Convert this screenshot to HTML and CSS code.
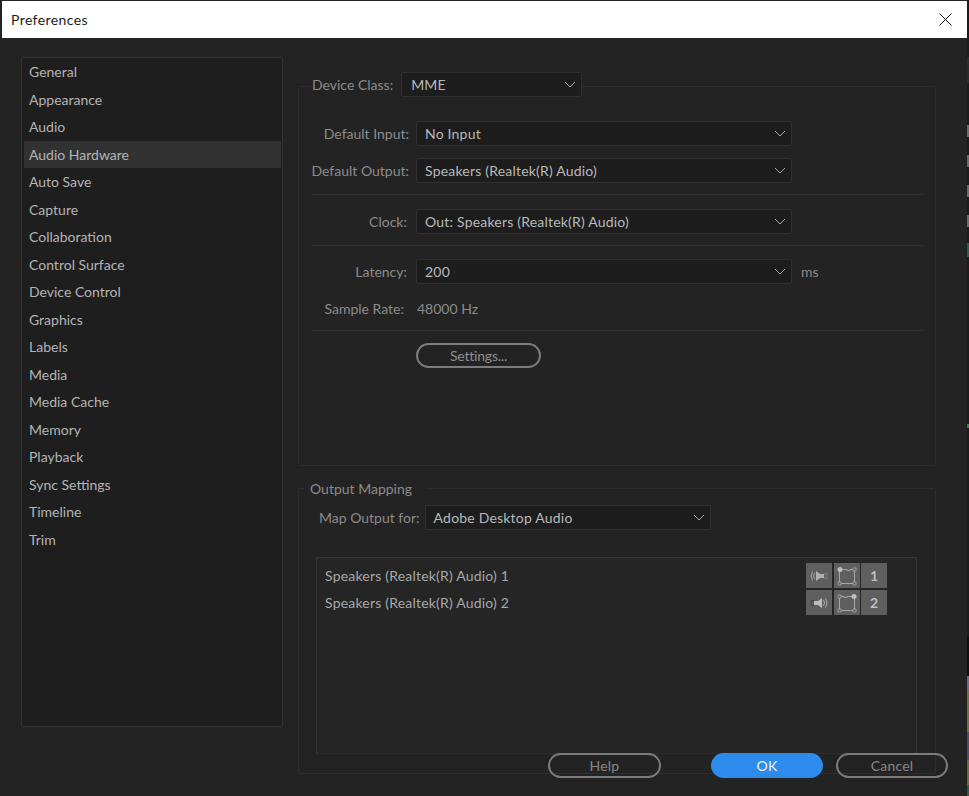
FILE: index.html
```html
<!DOCTYPE html>
<html lang="en">
<head>
<meta charset="utf-8">
<title>Preferences</title>
<link rel="stylesheet" href="styles.css">
</head>
<body>
<div class="window">
  <header class="titlebar">
    <span class="title">Preferences</span>
    <svg class="close" width="13" height="13" viewBox="0 0 13 13"><path d="M.5.5l12 12M12.5.5l-12 12" stroke="#111" stroke-width="1" fill="none"/></svg>
  </header>
  <div class="content">
    <nav class="sidebar">
      <div class="nav-item">General</div>
      <div class="nav-item">Appearance</div>
      <div class="nav-item">Audio</div>
      <div class="nav-item selected">Audio Hardware</div>
      <div class="nav-item">Auto Save</div>
      <div class="nav-item">Capture</div>
      <div class="nav-item">Collaboration</div>
      <div class="nav-item">Control Surface</div>
      <div class="nav-item">Device Control</div>
      <div class="nav-item">Graphics</div>
      <div class="nav-item">Labels</div>
      <div class="nav-item">Media</div>
      <div class="nav-item">Media Cache</div>
      <div class="nav-item">Memory</div>
      <div class="nav-item">Playback</div>
      <div class="nav-item">Sync Settings</div>
      <div class="nav-item">Timeline</div>
      <div class="nav-item">Trim</div>
    </nav>
    <main class="panels">
      <section class="group device">
        <div class="legend device-legend">
          <span class="label">Device Class:</span>
          <div class="select class-select"><span>MME</span><svg class="chev" width="12" height="7" viewBox="0 0 12 7"><path d="M1 1l5 5 5-5" fill="none" stroke="#a8a8a8"/></svg></div>
        </div>
        <div class="row row-input">
          <span class="label cell">Default Input:</span>
          <div class="select wide"><span>No Input</span><svg class="chev" width="12" height="7" viewBox="0 0 12 7"><path d="M1 1l5 5 5-5" fill="none" stroke="#a8a8a8"/></svg></div>
        </div>
        <div class="row row-output">
          <span class="label cell">Default Output:</span>
          <div class="select wide"><span>Speakers (Realtek(R) Audio)</span><svg class="chev" width="12" height="7" viewBox="0 0 12 7"><path d="M1 1l5 5 5-5" fill="none" stroke="#a8a8a8"/></svg></div>
        </div>
        <hr class="divider div-a">
        <div class="row">
          <span class="label cell clock-label">Clock:</span>
          <div class="select wide"><span>Out: Speakers (Realtek(R) Audio)</span><svg class="chev" width="12" height="7" viewBox="0 0 12 7"><path d="M1 1l5 5 5-5" fill="none" stroke="#a8a8a8"/></svg></div>
        </div>
        <hr class="divider div-b">
        <div class="row">
          <span class="label cell latency">Latency:</span>
          <div class="select wide"><span>200</span><svg class="chev" width="12" height="7" viewBox="0 0 12 7"><path d="M1 1l5 5 5-5" fill="none" stroke="#a8a8a8"/></svg></div>
          <span class="label unit">ms</span>
        </div>
        <div class="row rate">
          <span class="label cell rate-label">Sample Rate:</span>
          <span class="label rate-value">48000 Hz</span>
        </div>
        <hr class="divider div-c">
        <div class="row settings-row">
          <span class="cell"></span>
          <button class="pill settings">Settings...</button>
        </div>
      </section>
      <section class="group mapping">
        <div class="legend mapping-legend"><span class="label">Output Mapping</span></div>
        <div class="map-row">
          <span class="label">Map Output for:</span>
          <div class="select map-select"><span>Adobe Desktop Audio</span><svg class="chev" width="12" height="7" viewBox="0 0 12 7"><path d="M1 1l5 5 5-5" fill="none" stroke="#a8a8a8"/></svg></div>
        </div>
        <div class="channels">
          <div class="channel">
            <span class="label channel-name">Speakers (Realtek(R) Audio) 1</span>
            <div class="tiles">
              <div class="tile"><svg class="flip" width="20" height="14" viewBox="0 0 20 14"><path d="M2 4.500h3v5h-3z" fill="none" stroke="#777"/><path d="M5 5h4l4-3v10l-4-3H5z" fill="#b0b0b0"/><path d="M14.500 4Q16.500 7 14.500 10M16.500 2.500Q19.500 7 16.500 11.500" fill="none" stroke="#a0a0a0"/></svg></div>
              <div class="tile"><svg width="20" height="20" viewBox="0 0 20 20"><path d="M4 3.500h6v1h3v-1h4M17.500 4v13M17 17.500H3M2.500 17V5" fill="none" stroke="#a5a5a5"/><path d="M16 2h3v3h-3zM16 16h3v3h-3zM1 16h3v3H1z" fill="#5f5f5f" stroke="#a5a5a5" stroke-width=".8"/><circle cx="3" cy="3.500" r="2.500" fill="#bdbdbd"/></svg></div>
              <div class="tile num">1</div>
            </div>
          </div>
          <div class="channel">
            <span class="label channel-name">Speakers (Realtek(R) Audio) 2</span>
            <div class="tiles">
              <div class="tile"><svg width="20" height="14" viewBox="0 0 20 14"><path d="M2 4.500h3v5h-3z" fill="none" stroke="#444"/><path d="M5 5h4l4-3v10l-4-3H5z" fill="#bdbdbd"/><path d="M14.500 4Q16.500 7 14.500 10M16.500 2.500Q19.500 7 16.500 11.500" fill="none" stroke="#a8a8a8"/></svg></div>
              <div class="tile"><svg class="flip" width="20" height="20" viewBox="0 0 20 20"><path d="M4 3.500h6v1h3v-1h4M17.500 4v13M17 17.500H3M2.500 17V5" fill="none" stroke="#a5a5a5"/><path d="M16 2h3v3h-3zM16 16h3v3h-3zM1 16h3v3H1z" fill="#5f5f5f" stroke="#a5a5a5" stroke-width=".8"/><circle cx="3" cy="3.500" r="2.500" fill="#bdbdbd"/></svg></div>
              <div class="tile num">2</div>
            </div>
          </div>
        </div>
      </section>
    </main>
  </div>
  <footer class="footer">
    <button class="pill">Help</button>
    <button class="pill primary">OK</button>
    <button class="pill">Cancel</button>
  </footer>
</div>
<aside class="backdrop"></aside>
</body>
</html>
```
FILE: styles.css
```css
* { box-sizing: border-box; }
html, body { margin: 0; height: 100%; overflow: hidden; }
body {
  background: #1b1b1b;
  font-family: "Lato", "Open Sans", sans-serif;
  font-size: 14px;
  color: #a2a2a2;
  display: flex;
}
.backdrop {
  flex: none;
  width: 2px;
  height: 796px;
  background: linear-gradient(to bottom,
    #1b1b1b 0 57px, #2c2c2c 57px 83px, #1b1b1b 83px 125px,
    #6a6a6a 125px 137px, #1b1b1b 137px 155px, #6a6a6a 155px 167px,
    #1b1b1b 167px 185px, #6a6a6a 185px 197px, #1b1b1b 197px 215px,
    #6a6a6a 215px 227px, #1b1b1b 227px 243px, #2f5a4c 243px 257px,
    #1b1b1b 257px 424px, #2f8a4c 424px 428px, #1b1b1b 428px 637px,
    #0e0e0e 637px 676px, #6e6a8c 676px 690px, #6f6f40 690px 732px,
    #4e4c68 732px 760px, #6a6a3c 760px 785px, #2f5a4c 785px 796px);
}
.window {
  flex: none;
  width: 967px;
  height: 796px;
  padding: 1px 0 0 2px;
  background: #232323;
  display: flex;
  flex-direction: column;
}
.titlebar {
  flex: none;
  height: 37px;
  background: #fff;
  color: #1b1b1b;
  display: flex;
  align-items: center;
  justify-content: space-between;
  padding: 0 15px 1px 9px;
}
.title { letter-spacing: .4px; }
.content {
  flex: none;
  height: 716px;
  padding: 19px 0 0 19px;
  display: flex;
  align-items: flex-start;
  gap: 15px;
}
.sidebar {
  flex: none;
  width: 262px;
  height: 670px;
  padding: 0 1px 0 2px;
  background: #1e1e1e;
  border: 1px solid #333;
  border-radius: 2px;
}
.nav-item {
  height: 27.5px;
  line-height: 27.5px;
  padding-left: 5px;
  color: #b4b4b4;
}
.selected { background: #323232; }
.panels {
  flex: none;
  width: 638px;
  display: flex;
  flex-direction: column;
  gap: 22px;
  padding-top: 29px;
}
.group {
  border: 1px solid #2d2d2d;
  border-radius: 2px;
}
.device { height: 380px; padding: 0 12px; }
.mapping { height: 286px; padding: 0; }
.legend {
  display: flex;
  align-items: center;
  background: #232323;
  width: fit-content;
}
.device-legend {
  height: 25px;
  margin: -15px 0 0 0;
  padding: 0 0 0 1px;
  gap: 8px;
}
.label { color: #8b8b8b; white-space: nowrap; }
.select {
  height: 25px;
  background: #1d1d1d;
  border: 1px solid #2f2f2f;
  border-radius: 2px;
  display: flex;
  align-items: center;
  justify-content: space-between;
  padding: 0 5px 0 8px;
  color: #b9b9b9;
  letter-spacing: .2px;
  white-space: nowrap;
}
.class-select { width: 181px; padding-left: 9px; }
.wide { width: 376px; }
.row {
  display: flex;
  align-items: center;
  height: 25px;
  gap: 6px;
}
.cell { flex: none; width: 99px; text-align: right; padding-right: 1px; }
.clock-label { padding-right: 3px; }
.latency { padding-right: 3px; }
.row-input { margin-top: 24px; }
.row-output { margin-top: 12px; }
.divider { border: 0; border-top: 1px solid #303030; margin: 0; }
.div-a { margin: 11px 0 14px; }
.div-b { margin: 11px 0 13px; }
.div-c { margin: 11px 0 12px; }
.unit { margin-left: 3px; }
.rate { margin-top: 13px; gap: 12px; height: 22px; }
.rate-label { width: 94px; }
.rate-value { color: #8b8b8b; }
.settings-row { gap: 6px; }
.pill {
  font: inherit;
  height: 25px;
  border: 2px solid #7c7c7c;
  border-radius: 12.5px;
  background: transparent;
  color: #878787;
  padding: 0 0 1px;
  width: 112px;
  letter-spacing: .2px;
}
.settings { width: 125px; color: #8e8e8e; letter-spacing: -.2px; }
.mapping-legend {
  height: 20px;
  margin: -11px 0 0 5px;
  padding: 0 14px 0 6px;
}
.map-row {
  display: flex;
  align-items: center;
  gap: 5px;
  margin: 7px 0 0 20px;
}
.map-select { width: 286px; }
.channels {
  margin: 27px 0 0 17px;
  width: 601px;
  height: 197px;
  background: #252525;
  border: 1px solid #363636;
  border-bottom-color: #2d2d2d;
  padding: 5px 29px 0 8px;
}
.channel {
  display: flex;
  align-items: center;
  justify-content: space-between;
  height: 25px;
  margin-bottom: 2px;
}
.channel-name { color: #a8a8a8; letter-spacing: .2px; }
.tiles { display: flex; gap: 2px; }
.tile {
  width: 26px;
  height: 25px;
  background: #5f5f5f;
  display: flex;
  align-items: center;
  justify-content: center;
}
.flip { transform: scaleX(-1); }
.num { color: #bdbdbd; font-weight: 700; font-size: 14px; margin-left: -1px; }
.footer {
  flex: none;
  display: flex;
  margin: -1px 0 0 546px;
}
.footer .pill { flex: none; }
.footer .pill:first-child { width: 113px; }
.footer .pill:nth-child(2) { margin-left: 50px; }
.footer .pill:nth-child(3) { margin-left: 13px; }
.primary { background: #2d8ceb; border-color: #2d8ceb; color: #f2f2f2; }
```
